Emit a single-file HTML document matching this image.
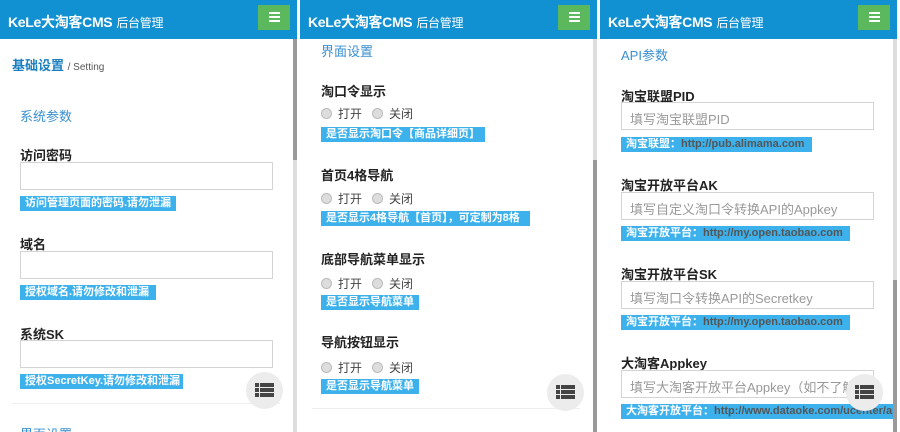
<!DOCTYPE html>
<html><head><meta charset="utf-8"><style>
*{margin:0;padding:0;box-sizing:border-box}
body{width:900px;height:432px;background:#fff;position:relative;overflow:hidden;font-family:"Liberation Sans","Noto Sans CJK SC",sans-serif}
.p{position:absolute;top:0;width:297px;height:432px;overflow:hidden;background:#fff}
.hd{position:absolute;left:0;top:0;width:297px;height:39px;background:#1190d2}
.hd .t{position:absolute;left:8px;top:12px;color:#fff;font-weight:bold;font-size:14px;white-space:nowrap;letter-spacing:-0.3px}
.hd .t small{font-weight:normal;font-size:12px;margin-left:4px}
.btn{position:absolute;left:258px;top:5px;width:32px;height:25px;background:#5cb85c}
.btn i{position:absolute;left:11px;width:11px;height:2px;background:#fff}
.a{position:absolute;white-space:nowrap}
.lk{color:#3a8fd0;font-size:13px}
.lb{color:#222;font-weight:bold;font-size:13px}
.in{position:absolute;height:28px;width:253px;border:1px solid #d4d4d4;font-size:13px;color:#999;padding:6px 0 0 8px;white-space:nowrap;overflow:hidden}
.bd{position:absolute;height:15px;background:#3db1ec;color:#fff;font-weight:bold;font-size:11px;line-height:15px;padding-left:5px;white-space:nowrap;overflow:hidden}
.bd b{color:#555}
.rd{position:absolute;font-size:12px;color:#444;white-space:nowrap}
.rd i{display:inline-block;width:11px;height:11px;border-radius:50%;background:#ddd;border:1px solid #bbb;vertical-align:-1px;margin-right:6px}
.sb{position:absolute;left:293px;top:39px;width:4px;height:393px;background:#ddd}
.th{position:absolute;left:0;width:4px;background:#999}
.rb{position:absolute;width:37px;height:37px;border-radius:50%;background:#ececec}
.rb i{position:absolute;height:4px;background:#444}
.ln{position:absolute;height:1px;background:#eee}
</style></head><body>

<div class="p" style="left:0">
<div class="hd"><div class="t">KeLe大淘客CMS<small>后台管理</small></div><div class="btn"><i style="top:7px"></i><i style="top:11px"></i><i style="top:15px"></i></div></div>
<div class="a" style="left:12px;top:55px;font-size:13px;color:#1a7fc1;font-weight:bold">基础设置 <span style="color:#555;font-weight:normal;font-size:10px">/ Setting</span></div>
<div class="a lk" style="left:20px;top:106px">系统参数</div>
<div class="a lb" style="left:20px;top:145px">访问密码</div>
<div class="in" style="left:20px;top:162px"></div>
<div class="bd" style="left:20px;top:196px;width:156px">访问管理页面的密码.请勿泄漏</div>
<div class="a lb" style="left:20px;top:234px">域名</div>
<div class="in" style="left:20px;top:251px"></div>
<div class="bd" style="left:20px;top:285px;width:136px">授权域名.请勿修改和泄漏</div>
<div class="a lb" style="left:20px;top:324px">系统SK</div>
<div class="in" style="left:20px;top:340px"></div>
<div class="bd" style="left:20px;top:374px;width:163px">授权SecretKey.请勿修改和泄漏</div>
<div class="ln" style="left:12px;top:403px;width:268px"></div>
<div class="a lk" style="left:20px;top:424px">界面设置</div>
<div class="rb" style="left:246px;top:372px"><i style="left:9px;top:11px;width:4px"></i><i style="left:14px;top:11px;width:14px"></i><i style="left:9px;top:16px;width:4px"></i><i style="left:14px;top:16px;width:14px"></i><i style="left:9px;top:21px;width:4px"></i><i style="left:14px;top:21px;width:14px"></i></div>
<div class="sb"><div class="th" style="top:0;height:121px"></div></div>
</div>

<div class="p" style="left:300px">
<div class="hd"><div class="t">KeLe大淘客CMS<small>后台管理</small></div><div class="btn"><i style="top:7px"></i><i style="top:11px"></i><i style="top:15px"></i></div></div>
<div class="a lk" style="left:21px;top:41px">界面设置</div>
<div class="a lb" style="left:21px;top:81px">淘口令显示</div>
<div class="rd" style="left:21px;top:105px"><i></i>打开 &nbsp;&nbsp;<i></i>关闭</div>
<div class="bd" style="left:21px;top:127px;width:164px">是否显示淘口令【商品详细页】</div>
<div class="a lb" style="left:21px;top:165px">首页4格导航</div>
<div class="rd" style="left:21px;top:190px"><i></i>打开 &nbsp;&nbsp;<i></i>关闭</div>
<div class="bd" style="left:21px;top:211px;width:209px">是否显示4格导航【首页】，可定制为8格</div>
<div class="a lb" style="left:21px;top:249px">底部导航菜单显示</div>
<div class="rd" style="left:21px;top:275px"><i></i>打开 &nbsp;&nbsp;<i></i>关闭</div>
<div class="bd" style="left:21px;top:295px;width:98px">是否显示导航菜单</div>
<div class="a lb" style="left:21px;top:332px">导航按钮显示</div>
<div class="rd" style="left:21px;top:359px"><i></i>打开 &nbsp;&nbsp;<i></i>关闭</div>
<div class="bd" style="left:21px;top:379px;width:98px">是否显示导航菜单</div>
<div class="ln" style="left:12px;top:408px;width:268px"></div>
<div class="rb" style="left:247px;top:374px"><i style="left:9px;top:11px;width:4px"></i><i style="left:14px;top:11px;width:14px"></i><i style="left:9px;top:16px;width:4px"></i><i style="left:14px;top:16px;width:14px"></i><i style="left:9px;top:21px;width:4px"></i><i style="left:14px;top:21px;width:14px"></i></div>
<div class="sb"><div class="th" style="top:121px;height:272px"></div></div>
</div>

<div class="p" style="left:600px">
<div class="hd"><div class="t">KeLe大淘客CMS<small>后台管理</small></div><div class="btn"><i style="top:7px"></i><i style="top:11px"></i><i style="top:15px"></i></div></div>
<div class="a lk" style="left:21px;top:45px">API参数</div>
<div class="a lb" style="left:21px;top:86px">淘宝联盟PID</div>
<div class="in" style="left:21px;top:102px">填写淘宝联盟PID</div>
<div class="bd" style="left:21px;top:137px;width:191px">淘宝联盟：<b>http://pub.alimama.com</b></div>
<div class="a lb" style="left:21px;top:175px">淘宝开放平台AK</div>
<div class="in" style="left:21px;top:192px">填写自定义淘口令转换API的Appkey</div>
<div class="bd" style="left:21px;top:226px;width:229px">淘宝开放平台：<b>http://my.open.taobao.com</b></div>
<div class="a lb" style="left:21px;top:264px">淘宝开放平台SK</div>
<div class="in" style="left:21px;top:281px">填写淘口令转换API的Secretkey</div>
<div class="bd" style="left:21px;top:315px;width:229px">淘宝开放平台：<b>http://my.open.taobao.com</b></div>
<div class="a lb" style="left:21px;top:353px">大淘客Appkey</div>
<div class="in" style="left:21px;top:370px">填写大淘客开放平台Appkey（如不了解，</div>
<div class="bd" style="left:21px;top:404px;width:280px">大淘客开放平台：<b>http://www.dataoke.com/ucenter/appkey</b></div>
<div class="rb" style="left:246px;top:374px"><i style="left:9px;top:11px;width:4px"></i><i style="left:14px;top:11px;width:14px"></i><i style="left:9px;top:16px;width:4px"></i><i style="left:14px;top:16px;width:14px"></i><i style="left:9px;top:21px;width:4px"></i><i style="left:14px;top:21px;width:14px"></i></div>
<div class="sb"><div class="th" style="top:241px;height:152px"></div></div>
</div>
</body></html>
